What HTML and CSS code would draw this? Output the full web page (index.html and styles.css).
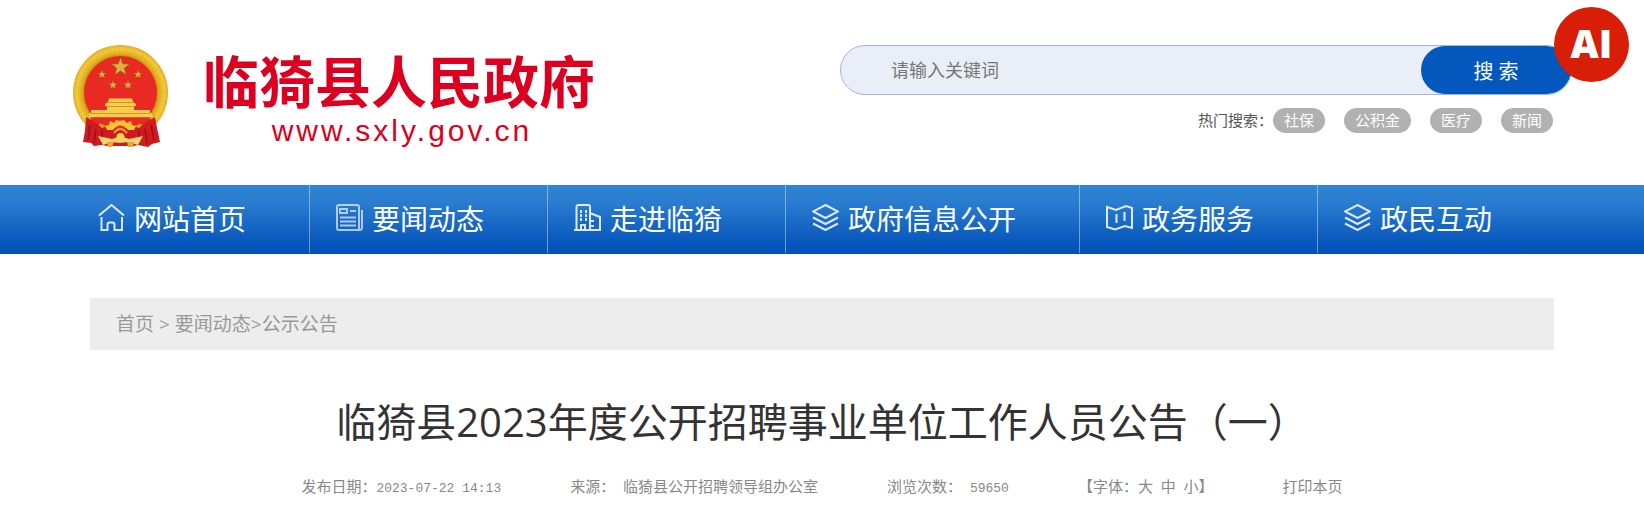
FILE: index.html
```html
<!DOCTYPE html>
<html lang="zh-CN">
<head>
  <meta charset="UTF-8">
  <meta name="viewport" content="width=device-width, initial-scale=1.0">
  <title>临猗县2023年度公开招聘事业单位工作人员公告（一）</title>
  <link rel="stylesheet" href="styles.css">
</head>
<body>
  <header class="header">
    <a class="logo" href="#">
      <svg class="emblem" viewBox="12 10 97 103" aria-hidden="true">
        <defs>
          <radialGradient id="gold">
            <stop offset="0.76" stop-color="#c98a12"/>
            <stop offset="0.82" stop-color="#e3ae22"/>
            <stop offset="0.92" stop-color="#f2cc3c"/>
            <stop offset="1" stop-color="#e0ad26"/>
          </radialGradient>
          <path id="star" d="M0-10 2.4-3.2 9.5-3.1 3.8 1.2 5.9 8.1 0 4 -5.9 8.1 -3.8 1.2 -9.5-3.1 -2.4-3.2Z"/>
        </defs>
        <circle cx="60.5" cy="57.5" r="47.5" fill="url(#gold)"/>
        <circle cx="60.5" cy="57.5" r="42" fill="none" stroke="#d39a1d" stroke-width="5" stroke-dasharray="1 3" opacity="0.25"/>
        <circle cx="60.5" cy="57.5" r="36.5" fill="#e92a22"/>
        <g fill="#e3b040" stroke="#8f5a1a" stroke-width="0.8">
          <use href="#star" transform="translate(60.5 32)"/>
          <use href="#star" transform="translate(42 39.5) scale(0.45)"/>
          <use href="#star" transform="translate(78 39.5) scale(0.45)"/>
          <use href="#star" transform="translate(53 50) scale(0.47)"/>
          <use href="#star" transform="translate(68 50) scale(0.47)"/>
        </g>
        <path d="M49 63.5H72L73 67 76 69V71H45V69L48 67Z M47 71H74V75H47Z M31 75H90V78H92V82.5H29V78H31Z" fill="#f6cf4e"/>
        <path d="M48 67.500H73M46 71.500H75M31 78.500H90" fill="none" stroke="#d98f25" stroke-width="1"/>
        <path d="M30 82.5H91L86 91 78 88 60 90 42 88 35 91Z" fill="#e92a22"/>
        <path d="M26 82Q38 88 42 93L50 90Q60 98 71 90L79 93Q85 87 95 82L97 93 100 107 92 109 88 112 78 110 74 111H47L42 110 34 111 31 108 23 107 25 96Z" fill="#cf1a20"/>
        <path d="M30 90 28 105 M36 94 34 108 M42 95V108 M91 90 94 105 M85 94 87 108 M79 95V108" fill="none" stroke="#9f0d18" stroke-width="1.5"/>
        <path d="M45 91 49 90 50 86 54 88 56 85 60 86 64 85 67 88 71 86 72 90 76 91 74 95 68 95Q60 86 53 95L47 95Z" fill="#f2c631"/>
        <path d="M54 98Q60 90 67 98" fill="none" stroke="#e0aa28" stroke-width="2"/>
        <path d="M38 101 52 104 58 102H63L69 104 83 101 78 110 68 107 60 108 52 107 43 110Z" fill="#f3d377"/>
        <path d="M47 107H54L52 112H48Z M67 107H74L73 112H68Z" fill="#e3ad2b"/>
        <circle cx="60.5" cy="102" r="4" fill="#f7d548"/>
      </svg>
      <span class="logo-text">
        <span class="logo-name">临猗县人民政府</span>
        <span class="logo-url">www.sxly.gov.cn</span>
      </span>
    </a>

    <div class="search">
      <form class="search-box">
        <input type="text" class="search-input" aria-label="关键词" placeholder="请输入关键词">
        <button type="button" class="search-btn">搜 索</button>
      </form>
      <div class="hot">
        <span class="hot-label">热门搜索：</span>
        <div class="hot-tags">
          <a href="#">社保</a>
          <a href="#">公积金</a>
          <a href="#">医疗</a>
          <a href="#">新闻</a>
        </div>
      </div>
    </div>
  </header>
  <button type="button" class="ai-btn">AI</button>

  <nav class="nav">
    <a href="#">
      <svg class="icon" viewBox="0 0 27 27"><path d="M1 11.5 13.5 1 26 11.5M3.5 13V26H9.5V20.5Q9.5 18.5 11.5 18.5H14.5Q16.5 18.5 16.5 20.5V26H24V13"/></svg>
      网站首页
    </a>
    <a href="#">
      <svg class="icon soft" viewBox="0 0 27 27"><path d="M23 5V3Q23 1 21 1H3Q1 1 1 3V24Q1 26 3 26H23Q26 26 26 24V6M23 5V24Q23 26 24 26M4 5H11V9H4ZM14 7H20M4 13.5H20M4 17.5H20M4 21.5H20"/></svg>
      要闻动态
    </a>
    <a href="#">
      <svg class="icon" viewBox="0 0 27 27"><path d="M0 26H27M2.500 26V3Q2.500 1 4.500 1H14Q16 1 16 3V26M16 9 26 13V26M7 26V21H11V26M16 17H20M16 22H20"/><path d="M7 6V9M12 6V9M7 10V13M12 10V13M7 14V17M12 14V17"/></svg>
      走进临猗
    </a>
    <a href="#">
      <svg class="icon" viewBox="0 0 27 27"><path d="M13.5 1 26 7.5 13.5 14 1 7.5ZM1 13.5 13.5 20 26 13.5M1 19.5 13.5 26 26 19.5"/></svg>
      政府信息公开
    </a>
    <a href="#">
      <svg class="icon" viewBox="0 0 27 27"><path d="M1 3 10 6 20 2 26 4V24L19 22 9 25.5 1 23ZM10.5 10V19M18.5 8V17"/></svg>
      政务服务
    </a>
    <a href="#">
      <svg class="icon" viewBox="0 0 27 27"><path d="M13.5 1 26 7.5 13.5 14 1 7.5ZM1 13.5 13.5 20 26 13.5M1 19.5 13.5 26 26 19.5"/></svg>
      政民互动
    </a>
  </nav>

  <main class="content">
    <div class="breadcrumb">
      <a href="#">首页</a> &gt; <a href="#">要闻动态</a>&gt;<a href="#">公示公告</a>
    </div>
    <h1 class="title">临猗县2023年度公开招聘事业单位工作人员公告（一）</h1>
    <div class="meta">
      <span>发布日期：<span class="num">2023-07-22 14:13</span></span>
      <span>来源：<span class="num"> </span>临猗县公开招聘领导组办公室</span>
      <span>浏览次数：<span class="num"> 59650</span></span>
      <span>【字体：<a href="#">大</a><span class="num"> </span><a href="#">中</a><span class="num"> </span><a href="#">小</a>】</span>
      <a href="#">打印本页</a>
    </div>
  </main>
</body>
</html>
```

FILE: styles.css
```css
* {
  box-sizing: border-box;
}

body {
  margin: 0;
  font-family: "Open Sans", "Noto Sans CJK SC", sans-serif;
  background: #fff;
  color: #333;
}

a {
  color: inherit;
  text-decoration: none;
}

button {
  border: 0;
  padding: 0;
  font-family: inherit;
  color: #fff;
  cursor: pointer;
}

/* header */
.header {
  display: flex;
  justify-content: space-between;
  align-items: flex-start;
  height: 185px;
  padding: 45px 72px 0;
}

.logo {
  display: flex;
  gap: 34px;
  color: #db0020;
}

.emblem {
  width: 97px;
  height: 103px;
}

.logo-text {
  display: flex;
  flex-direction: column;
  align-items: center;
  padding-top: 4px;
}

.logo-name {
  font-size: 56px;
  font-weight: bold;
  line-height: 64px;
}

.logo-url {
  padding-left: 6px;
  font-family: "Liberation Sans", Arial, sans-serif;
  font-size: 30px;
  line-height: 36px;
  letter-spacing: 3px;
}

.search {
  width: 49%;
  max-width: 732px;
}

.search-box {
  display: flex;
  height: 50px;
  border: 1px solid #a3b4e4;
  border-radius: 25px;
  background: #eaeff7;
  overflow: hidden;
}

.search-input {
  flex: 1;
  min-width: 0;
  padding: 0 50px;
  border: 0;
  background: none;
  font-family: inherit;
  font-size: 18px;
}

.search-input::placeholder {
  color: #777;
}

.search-btn {
  width: 150px;
  border-radius: 25px;
  background: #0457bd;
  font-size: 20px;
}

.hot {
  display: flex;
  justify-content: flex-end;
  margin: 13px 19px 0 0;
  font-size: 15px;
  line-height: 25px;
}

.hot-label {
  color: #555;
}

.hot-tags {
  display: flex;
  gap: 19px;
}

.hot-tags a {
  padding: 0 11px;
  border-radius: 13px;
  background: #b1b1b1;
  color: #fff;
}

.ai-btn {
  position: absolute;
  top: 7px;
  right: 15px;
  width: 75px;
  height: 75px;
  padding-bottom: 4px;
  border-radius: 50%;
  background: #d81e06;
  font-size: 39px;
  font-weight: 800;
}

/* navigation */
.nav {
  display: flex;
  height: 69px;
  padding: 0 72px;
  background: linear-gradient(#2f84d3, #2a7dcf 25%, #0756bc 85%, #0050b8);
}

.nav a {
  display: flex;
  align-items: center;
  gap: 9px;
  height: 68px;
  padding: 0 63px 3px 26px;
  border-right: 1px solid rgba(255, 255, 255, 0.4);
  color: #fff;
  font-size: 28px;
  white-space: nowrap;
}

.nav a:last-child {
  border-right: 0;
}

.icon {
  width: 27px;
  height: 27px;
  fill: none;
  stroke: #fff;
  stroke-width: 2;
  opacity: 0.85;
}

.icon.soft {
  opacity: 0.65;
}

/* article */
.content {
  margin: 44px 90px 0;
}

.breadcrumb {
  padding: 0 26px;
  background: #ededed;
  color: #999;
  font-size: 19px;
  line-height: 52px;
}

.title {
  margin: 42px 0 0;
  font-size: 40px;
  font-weight: normal;
  line-height: 60px;
  text-align: center;
}

.meta {
  display: flex;
  justify-content: center;
  gap: 69px;
  margin-top: 22px;
  color: #888;
  font-size: 15px;
  line-height: 24px;
  white-space: nowrap;
}

.num {
  font-family: "Liberation Mono", monospace;
  font-size: 13px;
  white-space: pre;
}
```
